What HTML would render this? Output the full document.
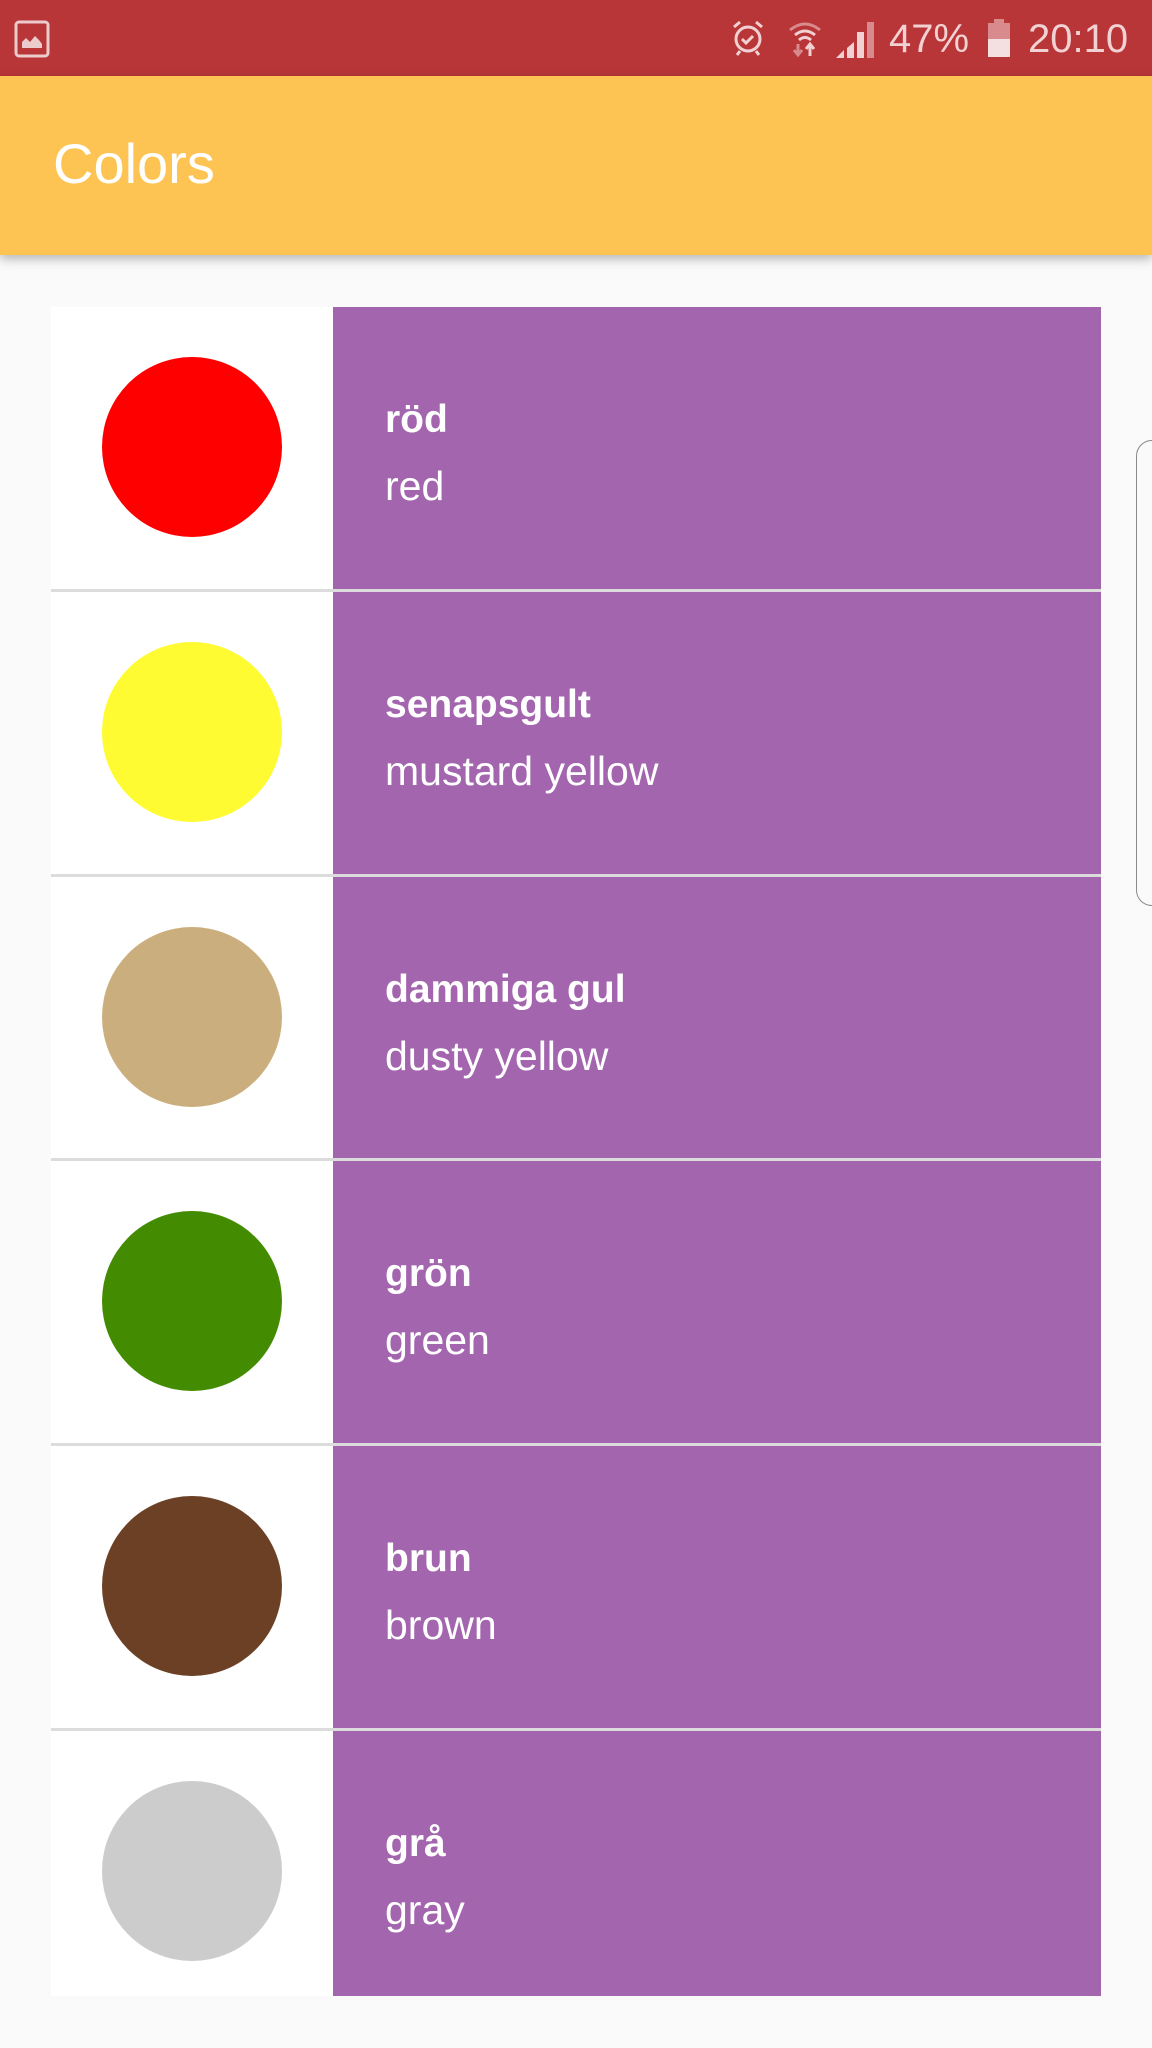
<!DOCTYPE html>
<html><head><meta charset="utf-8"><style>
*{margin:0;padding:0;box-sizing:border-box}
body{width:1152px;height:2048px;background:#fafafa;font-family:"Liberation Sans",sans-serif;position:relative;overflow:hidden}
.sb{position:absolute;left:0;top:0;width:1152px;height:76px;background:#b83538}
.ab{position:absolute;left:0;top:76px;width:1152px;height:179px;background:#fec453;box-shadow:0 4px 10px rgba(0,0,0,.28)}
.ab span{position:absolute;left:53px;top:60px;font-size:56px;color:#fff;line-height:1}
.row{position:absolute;left:51px;width:1050px;height:282px}
.l{position:absolute;left:0;top:0;width:282px;height:100%;background:#fff}
.c{position:absolute;left:51px;top:50px;width:180px;height:180px;border-radius:50%}
.r{position:absolute;left:282px;top:0;right:0;height:100%;background:#a365ae}
.t1{position:absolute;left:52px;top:91px;font-size:39px;font-weight:bold;color:#fff}
.t2{position:absolute;left:52px;top:156px;font-size:41px;color:#fff}
.sep{position:absolute;left:51px;width:1050px;height:3px;background:#dcdcdc}
.st{position:absolute;color:#f1d1d2;font-size:40px;top:17px}
</style></head><body>
<div class="sb">
<svg style="position:absolute;left:14px;top:20px" width="36" height="38" viewBox="0 0 36 38"><rect x="2" y="2" width="32" height="34" rx="3" fill="none" stroke="#eccbcc" stroke-width="3"/><path d="M8 28 L8 22 L12 18 L16 22 L21 16 L25 20 L28 24 L28 28Z" fill="#eccbcc"/></svg>
<svg style="position:absolute;left:730px;top:18px" width="36" height="40" viewBox="0 0 36 40"><circle cx="18" cy="21" r="12" fill="none" stroke="#f1d1d2" stroke-width="3"/><path d="M12 21l4 4 7-7M4 9l6-5M32 9l-6-5M10 33l-3 4M26 33l3 4" fill="none" stroke="#f1d1d2" stroke-width="3"/></svg>
<svg style="position:absolute;left:788px;top:18px" width="34" height="40" viewBox="0 0 34 40"><path d="M2 12 Q17 0 32 12" fill="none" stroke="#d88a8c" stroke-width="3"/><path d="M7 17 Q17 9 27 17M11 22 Q17 17 23 22" fill="none" stroke="#f1d1d2" stroke-width="3"/><path d="M10 26v10M6 32l4 5 4-5" stroke="#d88a8c" stroke-width="3" fill="none"/><path d="M22 38V28M18 31l4-5 4 5" stroke="#f1d1d2" stroke-width="3" fill="none"/></svg>
<svg style="position:absolute;left:834px;top:20px" width="42" height="40" viewBox="0 0 42 40"><path d="M2 38h8V30Z" fill="#f1d1d2"/><path d="M13 38h7V22l-7 6Z" fill="#f1d1d2"/><rect x="23" y="12" width="7" height="26" fill="#f1d1d2"/><rect x="33" y="2" width="7" height="36" fill="#d88a8c"/></svg>
<div class="st" style="left:889px">47%</div>
<svg style="position:absolute;left:986px;top:18px" width="26" height="40" viewBox="0 0 26 40"><rect x="8" y="1" width="10" height="4" fill="#d88a8c"/><rect x="2" y="5" width="22" height="16" fill="#d88a8c"/><rect x="2" y="21" width="22" height="18" fill="#f5e0e1"/></svg>
<div class="st" style="left:1028px">20:10</div>
</div>
<div class="ab"><span>Colors</span></div>

<div class="row" style="top:307px"><div class="l"><div class="c" style="background:#ff0000"></div></div><div class="r"><div class="t1">röd</div><div class="t2">red</div></div></div>
<div class="sep" style="top:589px"></div>
<div class="row" style="top:592px"><div class="l"><div class="c" style="background:#fffb33"></div></div><div class="r"><div class="t1">senapsgult</div><div class="t2">mustard yellow</div></div></div>
<div class="sep" style="top:874px"></div>
<div class="row" style="top:877px"><div class="l"><div class="c" style="background:#cbae7d"></div></div><div class="r"><div class="t1">dammiga gul</div><div class="t2">dusty yellow</div></div></div>
<div class="sep" style="top:1158px"></div>
<div class="row" style="top:1161px"><div class="l"><div class="c" style="background:#438b00"></div></div><div class="r"><div class="t1">grön</div><div class="t2">green</div></div></div>
<div class="sep" style="top:1443px"></div>
<div class="row" style="top:1446px"><div class="l"><div class="c" style="background:#6b4024"></div></div><div class="r"><div class="t1">brun</div><div class="t2">brown</div></div></div>
<div class="sep" style="top:1728px"></div>
<div class="row" style="top:1731px;height:265px"><div class="l"><div class="c" style="background:#cccccc"></div></div><div class="r"><div class="t1">grå</div><div class="t2">gray</div></div></div>

<div style="position:absolute;left:1136px;top:440px;width:30px;height:466px;border:1.5px solid #8a8a8a;border-radius:16px 0 0 16px"></div>
</body></html>
